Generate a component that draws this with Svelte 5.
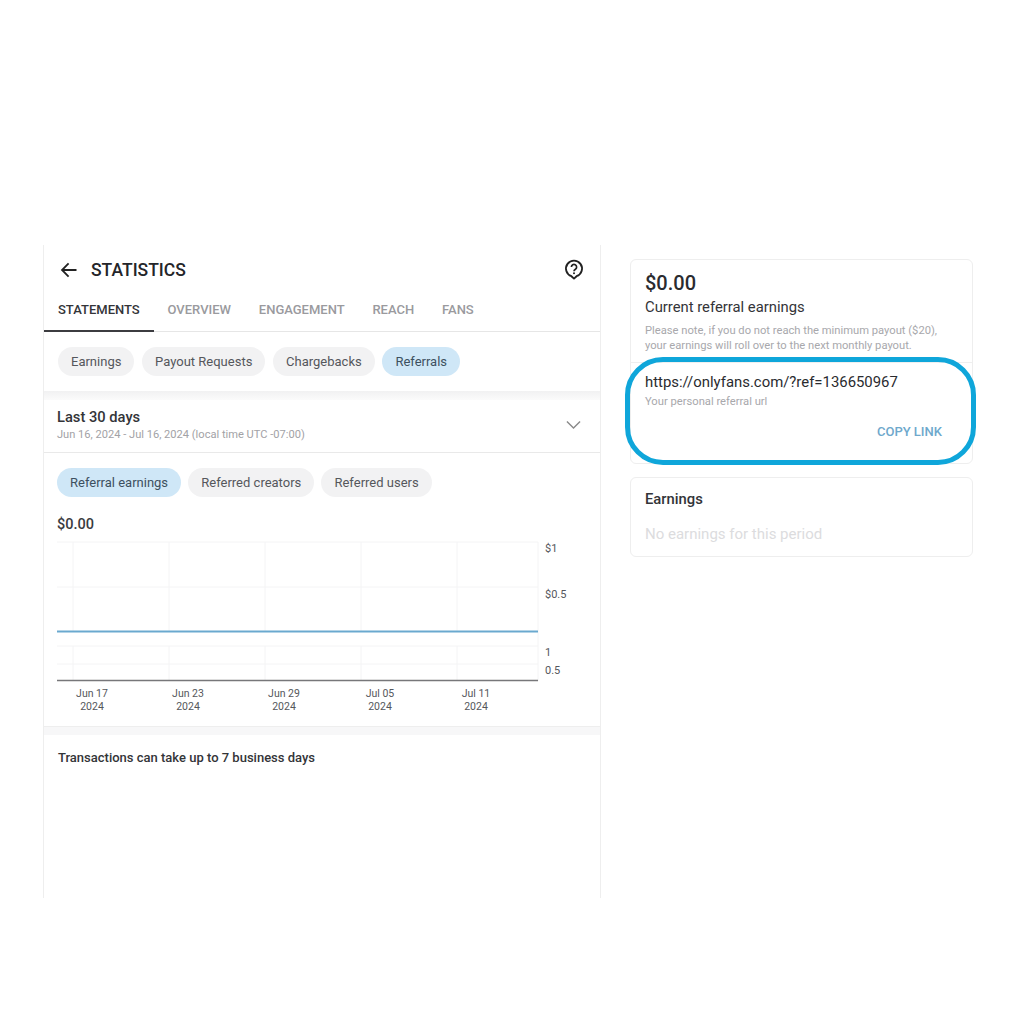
<script lang="ts">
	const tabs = ['Statements', 'Overview', 'Engagement', 'Reach', 'Fans'];
	const types = ['Earnings', 'Payout Requests', 'Chargebacks', 'Referrals'];
	const metrics = ['Referral earnings', 'Referred creators', 'Referred users'];
	const gridX = [73, 169, 265, 361, 457];
	const ticks = [
		{ x: 92, label: 'Jun 17' },
		{ x: 188, label: 'Jun 23' },
		{ x: 284, label: 'Jun 29' },
		{ x: 380, label: 'Jul 05' },
		{ x: 476, label: 'Jul 11' }
	];
</script>

<div class="page">
	<section class="stats">
		<header class="title-row">
			<svg class="back" viewBox="0 0 18 16" width="18" height="16" aria-hidden="true">
				<path d="M16.5 8H2M8.6 1.4 2 8l6.6 6.6" fill="none" stroke="#222" stroke-width="1.8" />
			</svg>
			<h1>STATISTICS</h1>
			<svg class="help" viewBox="0 0 20 22" width="20" height="22" aria-hidden="true">
				<path
					d="M10 19.6 7.4 17.2A8 8 0 1 1 12.6 17.2Z"
					fill="none"
					stroke="#222"
					stroke-width="1.9"
					stroke-linejoin="round"
				/>
				<path
					d="M7.4 8a2.6 2.6 0 1 1 4 2.2c-.9.6-1.4 1-1.4 2"
					fill="none"
					stroke="#222"
					stroke-width="1.7"
				/>
				<circle cx="10" cy="14.3" r="1" fill="#222" />
			</svg>
		</header>

		<nav class="tabs">
			{#each tabs as tab, i}
				<span class="tab" class:active={i === 0}>{tab}</span>
			{/each}
		</nav>

		<div class="chips types">
			{#each types as type}
				<span class="chip" class:on={type === 'Referrals'}>{type}</span>
			{/each}
		</div>

		<div class="band top"></div>

		<div class="period">
			<div>
				<div class="period-name">Last 30 days</div>
				<div class="period-dates">Jun 16, 2024 - Jul 16, 2024 (local time UTC -07:00)</div>
			</div>
			<svg viewBox="0 0 16 10" width="15" height="10" aria-hidden="true">
				<path d="M1 1.2 8 8.2l7-7" fill="none" stroke="#8a8a8a" stroke-width="1.5" />
			</svg>
		</div>

		<div class="chips metrics">
			{#each metrics as metric, i}
				<span class="chip" class:on={i === 0}>{metric}</span>
			{/each}
		</div>

		<div class="total">$0.00</div>

		<svg class="chart" viewBox="57 538 520 180" width="520" height="180" aria-hidden="true">
			{#each gridX as x}
				<line x1={x} x2={x} y1="542" y2="631" class="grid" />
				<line x1={x} x2={x} y1="646" y2="681" class="grid" />
			{/each}
			<line x1="57" x2="538" y1="542" y2="542" class="grid" />
			<line x1="57" x2="538" y1="587" y2="587" class="grid" />
			<line x1="57" x2="538" y1="646" y2="646" class="grid" />
			<line x1="57" x2="538" y1="664" y2="664" class="grid" />
			<line x1="538" x2="538" y1="542" y2="681" class="grid" />
			<line x1="57" x2="538" y1="631.5" y2="631.5" class="series" />
			<line x1="57" x2="538" y1="680.5" y2="680.5" class="axis" />
			<text x="545" y="552">$1</text>
			<text x="545" y="598">$0.5</text>
			<text x="545" y="656">1</text>
			<text x="545" y="674">0.5</text>
			{#each ticks as tick}
				<text class="tick" x={tick.x} y="697" text-anchor="middle">{tick.label}</text>
				<text class="tick" x={tick.x} y="710" text-anchor="middle">2024</text>
			{/each}
		</svg>

		<div class="band bottom"></div>

		<p class="notice">Transactions can take up to 7 business days</p>
	</section>

	<aside class="side">
		<div class="card referral">
			<div class="card-top">
				<div class="amount">$0.00</div>
				<div class="amount-label">Current referral earnings</div>
				<p class="note">
					Please note, if you do not reach the minimum payout ($20),<br />your earnings will roll over
					to the next monthly payout.
				</p>
			</div>
			<div class="card-link">
				<div class="url">https://onlyfans.com/?ref=136650967</div>
				<div class="url-label">Your personal referral url</div>
				<div class="copy">COPY LINK</div>
			</div>
			<div class="highlight"></div>
		</div>

		<div class="card earnings">
			<div class="earnings-title">Earnings</div>
			<div class="earnings-empty">No earnings for this period</div>
		</div>
	</aside>
</div>

<style>
	:global(body) {
		background: #fff;
	}

	.page {
		display: flex;
		align-items: flex-start;
		gap: 29px;
		height: 1024px;
		box-sizing: border-box;
		padding: 245px 0 0 43px;
		font-family: Roboto, 'Liberation Sans', sans-serif;
		color: #242529;
	}

	.stats {
		width: 558px;
		height: 653px;
		box-sizing: border-box;
		border-left: 1px solid #eeeeee;
		border-right: 1px solid #eeeeee;
	}

	.title-row {
		display: flex;
		align-items: center;
		height: 48px;
		box-sizing: border-box;
		padding: 2px 16px 0;
	}

	.back {
		margin-right: 13px;
	}

	h1 {
		flex: 1;
		margin: 0;
		font-size: 17.5px;
		font-weight: 500;
	}

	.tabs {
		display: flex;
		height: 39px;
		box-sizing: border-box;
		border-bottom: 1px solid #e6e6e6;
	}

	.tab {
		padding: 9px 13.8px 0 14px;
		font-size: 13px;
		font-weight: 500;
		text-transform: uppercase;
		color: #9a9a9e;
	}

	.tab.active {
		height: 39px;
		box-sizing: border-box;
		border-bottom: 2px solid #3c3c40;
		color: #333438;
	}

	.chips {
		display: flex;
		gap: 7.7px;
		padding-left: 14px;
	}

	.types {
		padding-top: 15px;
	}

	.metrics {
		gap: 7.2px;
		padding-top: 15px;
		padding-left: 13px;
	}

	.chip {
		display: flex;
		align-items: center;
		height: 29px;
		padding: 0 13px;
		border-radius: 15px;
		background: #f2f2f3;
		font-size: 13px;
		color: #55575c;
	}

	.chip.on {
		background: #cfe7f7;
		color: #3d5060;
	}

	.band {
		background: #f7f7f8;
	}

	.band.top {
		height: 9px;
		margin-top: 15px;
		background: linear-gradient(#f1f1f2, #fbfbfb);
	}

	.band.bottom {
		height: 9px;
		margin-top: 8px;
		border-top: 1px solid #eeeeee;
		box-sizing: border-box;
	}

	.period {
		display: flex;
		align-items: center;
		justify-content: space-between;
		height: 53px;
		box-sizing: border-box;
		padding: 0 19px 3px 13px;
		border-bottom: 1px solid #e9e9e9;
	}

	.period-name {
		font-size: 14.7px;
		font-weight: 500;
		line-height: 19px;
		color: #333438;
	}

	.period-dates {
		margin-top: 1px;
		font-size: 11.1px;
		line-height: 14px;
		color: #a2a2a6;
	}

	.total {
		margin: 19px 0 0 13px;
		font-size: 14.5px;
		font-weight: 500;
		line-height: 18px;
		color: #3a3b3f;
	}

	.chart {
		display: block;
		margin: 4px 0 0 13px;
	}

	.chart text {
		font-size: 11px;
		fill: #55575c;
	}

	.chart text.tick {
		font-size: 10.5px;
	}

	.grid {
		stroke: #f4f4f5;
		stroke-width: 1;
	}

	.series {
		stroke: #6aa9cf;
		stroke-width: 2;
	}

	.axis {
		stroke: #77777a;
		stroke-width: 1.5;
	}

	.notice {
		margin: 14px 0 0 14px;
		font-size: 13px;
		font-weight: 500;
		line-height: 18px;
		color: #333438;
	}

	.side {
		display: flex;
		flex-direction: column;
		gap: 13px;
		width: 343px;
		padding-top: 14px;
	}

	.card {
		position: relative;
		box-sizing: border-box;
		border: 1px solid #eeeeee;
		border-radius: 6px;
	}

	.card-top {
		height: 103px;
		box-sizing: border-box;
		padding: 11px 14px 0;
		border-bottom: 1px solid #efefef;
	}

	.amount {
		font-size: 20px;
		font-weight: 500;
		line-height: 24px;
		color: #2a2b2f;
	}

	.amount-label {
		margin-top: 1px;
		font-size: 14.8px;
		line-height: 22px;
		color: #333438;
	}

	.note {
		margin: 5px 0 0;
		font-size: 11.2px;
		line-height: 15px;
		color: #a8a8ac;
	}

	.card-link {
		height: 100px;
		box-sizing: border-box;
		padding: 10px 14px 0;
	}

	.url {
		font-size: 14.9px;
		line-height: 18px;
		color: #2a2b2f;
	}

	.url-label {
		margin-top: 4px;
		font-size: 11.2px;
		line-height: 14px;
		color: #a8a8ac;
	}

	.copy {
		margin: 15px 16px 0 0;
		text-align: right;
		font-size: 13px;
		font-weight: 500;
		line-height: 16px;
		color: #6ea8cc;
	}

	/* the marker ring drawn over the link part of the card */
	.highlight {
		position: absolute;
		left: -6px;
		right: -4px;
		top: 97px;
		height: 108px;
		box-sizing: border-box;
		border: 5.5px solid #0fa6da;
		border-radius: 38px;
		pointer-events: none;
	}

	.earnings {
		height: 80px;
		padding: 12px 14px 0;
	}

	.earnings-title {
		font-size: 14.8px;
		font-weight: 500;
		line-height: 18px;
		color: #333438;
	}

	.earnings-empty {
		margin-top: 17px;
		font-size: 15px;
		line-height: 18px;
		color: #dcdcde;
	}
</style>
